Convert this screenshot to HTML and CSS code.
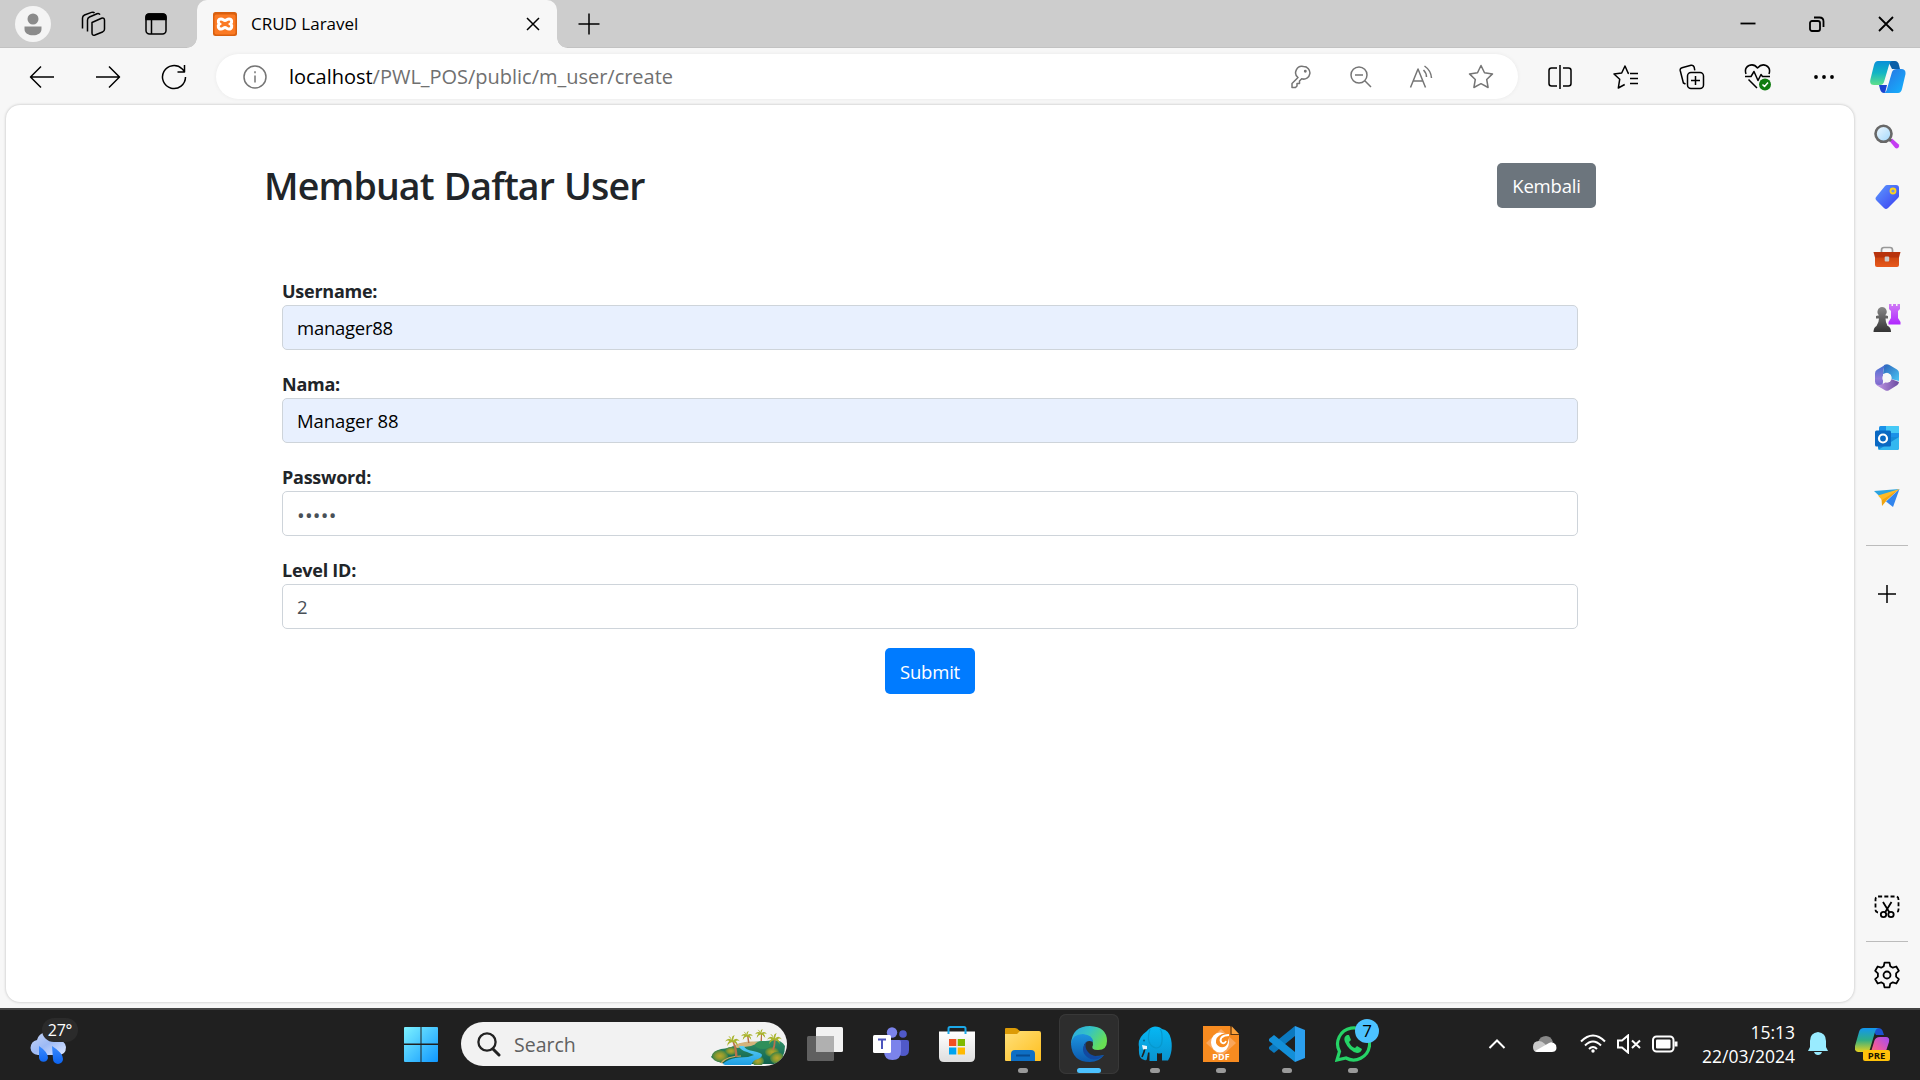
FILE: index.html
```html
<!DOCTYPE html>
<html lang="id">
<head>
<meta charset="utf-8">
<title>CRUD Laravel</title>
<link rel="stylesheet" href="styles.css">
</head>
<body>
<svg class="defs" width="0" height="0" aria-hidden="true">
  <defs>
    <linearGradient id="cpA" x1="0" y1="0" x2="0" y2="1"><stop offset="0" stop-color="#0a8fd8"/><stop offset=".5" stop-color="#12b5c4"/><stop offset="1" stop-color="#5fe08a"/></linearGradient>
    <linearGradient id="cpB" x1="0" y1="0" x2="1" y2="1"><stop offset="0" stop-color="#2a6fe0"/><stop offset="1" stop-color="#14b4ff"/></linearGradient>
    <linearGradient id="cpC" x1="0" y1="0" x2="0" y2="1"><stop offset="0" stop-color="#1296f0"/><stop offset=".5" stop-color="#2fae86"/><stop offset="1" stop-color="#e8d21c"/></linearGradient>
    <linearGradient id="cpD" x1="1" y1="0" x2="0" y2="1"><stop offset="0" stop-color="#a24cf5"/><stop offset=".6" stop-color="#ee5aa0"/><stop offset="1" stop-color="#ff7a55"/></linearGradient>
    <linearGradient id="purple" x1="0" y1="0" x2="0" y2="1"><stop offset="0" stop-color="#cf7bf5"/><stop offset="1" stop-color="#b026ff"/></linearGradient>
    <linearGradient id="tag" x1="0" y1="0" x2="1" y2="1"><stop offset="0" stop-color="#5d9bff"/><stop offset="1" stop-color="#3a3cf0"/></linearGradient>
    <linearGradient id="pawn" x1="0" y1="0" x2="0" y2="1"><stop offset="0" stop-color="#888"/><stop offset="1" stop-color="#333"/></linearGradient>
    <linearGradient id="glass" x1="0" y1="0" x2="1" y2="1"><stop offset="0" stop-color="#f2f9ff"/><stop offset="1" stop-color="#9fd6fa"/></linearGradient>
    <linearGradient id="red" x1="0" y1="0" x2="0" y2="1"><stop offset="0" stop-color="#c9430f"/><stop offset="1" stop-color="#e8591c"/></linearGradient>
    <linearGradient id="hexL" x1="0" y1="0" x2="0" y2="1"><stop offset="0" stop-color="#3d6fd0"/><stop offset=".6" stop-color="#8f7ad8"/><stop offset="1" stop-color="#6f63c6"/></linearGradient>
    <linearGradient id="hexR" x1="0" y1="0" x2="1" y2="1"><stop offset="0" stop-color="#2a60b8"/><stop offset="1" stop-color="#4cc6f4"/></linearGradient>
    <linearGradient id="hexB" x1="0" y1="0" x2="1" y2="0"><stop offset="0" stop-color="#c49be8"/><stop offset="1" stop-color="#6a4aa0"/></linearGradient>
    <linearGradient id="win" x1="0" y1="0" x2="1" y2="1"><stop offset="0" stop-color="#7df2ff"/><stop offset="1" stop-color="#0f97ff"/></linearGradient>
    <linearGradient id="drop" x1="0" y1="0" x2="0" y2="1"><stop offset="0" stop-color="#3b8bff"/><stop offset="1" stop-color="#0b63f0"/></linearGradient>
    <linearGradient id="cloud" x1="0" y1="0" x2="1" y2="1"><stop offset="0" stop-color="#c6d4f5"/><stop offset=".5" stop-color="#9dbaf5"/><stop offset="1" stop-color="#dfe8ff"/></linearGradient>
    <linearGradient id="folder" x1="0" y1="0" x2="1" y2="1"><stop offset="0" stop-color="#ffe07a"/><stop offset="1" stop-color="#ffbf1f"/></linearGradient>
    <linearGradient id="edgeTop" x1="0" y1="0" x2="1" y2=".5"><stop offset="0" stop-color="#2aa4e6"/><stop offset=".5" stop-color="#35c3c4"/><stop offset="1" stop-color="#68e054"/></linearGradient>
    <linearGradient id="edgeLow" x1="0" y1="0" x2="0" y2="1"><stop offset="0" stop-color="#1d95e0"/><stop offset="1" stop-color="#0c58ac"/></linearGradient>
    <linearGradient id="ele" x1="0" y1="0" x2="0" y2="1"><stop offset="0" stop-color="#06b8f4"/><stop offset="1" stop-color="#0a93cf"/></linearGradient>
    <linearGradient id="white" x1="0" y1="0" x2="0" y2="1"><stop offset="0" stop-color="#fff"/><stop offset="1" stop-color="#dedede"/></linearGradient>
    <linearGradient id="river" x1="0" y1="0" x2="0" y2="1"><stop offset="0" stop-color="#5ccdf5"/><stop offset="1" stop-color="#1d9fe4"/></linearGradient>
    <linearGradient id="hill" x1="0" y1="0" x2="0" y2="1"><stop offset="0" stop-color="#2f9068"/><stop offset="1" stop-color="#12604c"/></linearGradient>
    <radialGradient id="bush"><stop offset="0" stop-color="#b9a52e"/><stop offset=".5" stop-color="#8d9a2f"/><stop offset="1" stop-color="#3c8247"/></radialGradient>
    <symbol id="fronds" viewBox="0 0 14 11"><path d="M7 5Q3 1.500 0 6q3-1.500 4-.5-2 1.500-2 5 2-3.500 5-4 3 .5 5 4 0-3.500-2-5 2-1 4 .5Q11 1.500 7.500 5 8 2 9-.0 6 1 6.500 4 5 1 3 .5 4.500 3 7 5z" fill="#a9b42c"/></symbol>
  </defs>
</svg>

<header class="titlebar">
  <div class="title-tools">
    <svg width="36" height="36" viewBox="0 0 36 36"><circle cx="18" cy="18" r="18" fill="#f4f4f4"/><circle cx="18" cy="13" r="5.500" fill="#8b8b8b"/><path d="M9.500 20.500h17v2.500c0 4-3.500 6.300-8.500 6.300S9.500 27 9.500 23z" fill="#8b8b8b"/></svg>
    <svg class="line" width="26" height="26" viewBox="0 0 26 26"><path d="M12 11.500l9.500-4.200q3-1 3 2v9q0 2-2 2.700L15 24q-3 1-3-2zM7.500 20.500V9q0-2 2-3L17 2.700q2-.8 3 1M2.500 17.500V7q0-2 2-3L11.500 1.400q2-.7 3 .6"/></svg>
    <svg class="line" width="24" height="24" viewBox="0 0 24 24"><rect x="2" y="2" width="20" height="20" rx="3.500"/><path d="M2 7.500V5q0-3 3-3h14q3 0 3 3v2.500z" fill="#000"/><path d="M7.500 8v14"/></svg>
  </div>
  <div class="tab">
    <svg width="24" height="24" viewBox="0 0 24 24"><rect width="24" height="24" rx="2.500" fill="#d9600f"/><rect x="1.500" y="2.500" width="21" height="20" rx="2" fill="#fb7a24"/><path d="M8 7c-3 0-3.500 3.500-1.500 5-2 1.500-1.500 5 1.500 5 2 0 2.500-1.500 4-1.500s2 1.500 4 1.500c3 0 3.500-3.500 1.500-5 2-1.500 1.500-5-1.500-5-2 0-2.500 1.500-4 1.500S10 7 8 7z" fill="none" stroke="#fff" stroke-width="3"/></svg>
    <span class="tab-title">CRUD Laravel</span>
    <svg class="line close" width="14" height="14" viewBox="0 0 14 14"><path d="M1 1l12 12M13 1L1 13"/></svg>
  </div>
  <div class="new-tab"><svg class="line" width="22" height="22" viewBox="0 0 22 22"><path d="M11 .5v21M.5 11h21"/></svg></div>
  <div class="window-buttons">
    <svg class="line bold" width="16" height="16" viewBox="0 0 16 16"><path d="M.5 7.500h15"/></svg>
    <svg class="line bold" width="16" height="16" viewBox="0 0 16 16"><rect x="1" y="5" width="10" height="10" rx="2"/><path d="M5 1.500h5.500q4 0 4 4V11"/></svg>
    <svg class="line bold" width="16" height="16" viewBox="0 0 16 16"><path d="M1 1l14 14M15 1L1 15"/></svg>
  </div>
</header>

<nav class="toolbar">
  <div class="nav-buttons">
    <svg class="line" width="26" height="24" viewBox="0 0 26 24"><path d="M25 12H2M12 1.500L1.500 12 12 22.500"/></svg>
    <svg class="line" width="26" height="24" viewBox="0 0 26 24"><path d="M1 12h23M14 1.500L24.500 12 14 22.500"/></svg>
    <svg class="line" width="26" height="26" viewBox="0 0 26 26"><path d="M24.500 13A11.500 11.500 0 1 1 21 4.800L23.500 7.500M23.500 1v7h-7"/></svg>
  </div>
  <div class="address">
    <svg class="line grey" width="24" height="24" viewBox="0 0 24 24"><circle cx="12" cy="12" r="11"/><path d="M12 10.500v7M12 6.300v2"/></svg>
    <span class="url"><b>localhost</b>/PWL_POS/public/m_user/create</span>
    <div class="address-icons">
      <svg class="line grey" width="20" height="24" viewBox="0 0 20 24"><path d="M12.500 1.500a6.300 6.300 0 1 1-1.800 12.300L8.500 16v2.500H6V21l-1.500 1.500H1V18.500l6-6A6.300 6.300 0 0 1 12.500 1.500z"/><circle cx="14.300" cy="6.300" r=".7"/></svg>
      <svg class="line grey" width="22" height="22" viewBox="0 0 22 22"><circle cx="9" cy="9" r="8"/><path d="M14.800 14.800L21 21M5 9h8"/></svg>
      <svg class="line grey" width="24" height="24" viewBox="0 0 24 24"><path d="M1.500 22.500L9 4l7.500 18.500M4.300 16h9.400M14.500 5q3 3 3 7M15.500 1q6.500 4.500 7 12"/></svg>
      <svg class="line grey" width="26" height="26" viewBox="0 0 26 26"><path d="M13 1.500l3.500 7.300 8 1.100-5.800 5.600 1.400 8L13 19.700l-7.100 3.800 1.400-8L1.500 9.900l8-1.100z"/></svg>
    </div>
  </div>
  <div class="browser-actions">
    <svg class="line" width="26" height="24" viewBox="0 0 26 24"><path d="M10 3H4.500Q2 3 2 5.500v13Q2 21 4.500 21H10M16 3h5.500Q24 3 24 5.500v13Q24 21 21.500 21H16M13 0v24"/></svg>
    <svg class="line" width="26" height="26" viewBox="0 0 26 26"><path d="M16 9.500l-.8-.2L12 2 8.700 9 1 10l5.700 5.300L5.300 24l6.400-3.500M17 9.500h8M17 14.500h8M17 19.500h8M16 9.300l-1.500-.3"/></svg>
    <svg class="line" width="26" height="26" viewBox="0 0 26 26"><path d="M6.500 20L4.400 19 1.200 6.500Q.8 4.500 3 3.800L12 1.300q2.500-.6 3.200 2l.6 3"/><rect x="8.500" y="8.500" width="16" height="16" rx="3.500"/><path d="M16.500 12v9M12 16.500h9"/></svg>
    <svg class="line" width="28" height="28" viewBox="0 0 28 28"><path d="M2 11Q0 5 5 2.500q5-2 8.500 2.500 4-4.500 8.500-2.500Q27 5 25 11M1 13.500h6l3-5 4 9 3-6 1.500 2H26M4.500 16.500L13 25"/><circle cx="21" cy="21.500" r="6" fill="#107c10" stroke="none"/><path d="M18.500 21.500l2 2 3.500-4" stroke="#fff"/></svg>
    <svg width="22" height="6" viewBox="0 0 22 6"><circle cx="3" cy="3" r="1.900"/><circle cx="11" cy="3" r="1.900"/><circle cx="19" cy="3" r="1.900"/></svg>
  </div>
  <div class="copilot">
    <svg width="36" height="34" viewBox="0 0 36 34"><path d="M18 1h7q3 0 4 4l1 4h-8z" fill="#0b5fa8"/><path d="M9 25h8l-2 8h-1q-3 0-4-4z" fill="#1a44d0"/><path d="M8 1h15q-3 0-4 4l-5 17q-1 3-4 3H4q-5 0-3.500-6L4 5q1-4 4-4z" fill="url(#cpA)"/><path d="M27 9h4q5 0 4.500 5L32 29q-1 4-4 4H13q3 0 4-4l5-17q1-3 5-3z" fill="url(#cpB)"/></svg>
  </div>
</nav>

<div class="workspace">
  <main class="page">
    <div class="container">
      <div class="heading">
        <h2>Membuat Daftar User</h2>
        <a class="btn secondary">Kembali</a>
      </div>
      <form class="form">
        <div class="group"><label>Username:</label><input class="control filled" type="text" value="manager88"></div>
        <div class="group"><label>Nama:</label><input class="control filled name" type="text" value="Manager 88"></div>
        <div class="group"><label>Password:</label><input class="control secret" type="password" value="12345"></div>
        <div class="group"><label>Level ID:</label><input class="control" type="text" value="2"></div>
        <div class="actions"><button class="btn primary" type="button">Submit</button></div>
      </form>
    </div>
  </main>

  <aside class="sidebar">
    <div class="side-apps">
      <svg width="26" height="26" viewBox="0 0 26 26"><path d="M15.500 17l2.500-2.500 6.500 5.800q1.500 1.700 0 3.200t-3.200.5z" fill="#c43df2"/><path d="M14 14l3 3" stroke="#666" stroke-width="3"/><circle cx="9.500" cy="9.800" r="8" fill="url(#glass)" stroke="#686868" stroke-width="2.600"/></svg>
      <svg width="26" height="26" viewBox="0 0 26 26"><path d="M13 1h9q3 0 3 3v8q0 1-1 2L14 24q-2 2-4 0l-7.500-7.500q-2-2 0-4L11 2q1-1 2-1z" fill="url(#tag)"/><circle cx="19" cy="7" r="2.500" fill="#6d8ff0" stroke="#ffd31a" stroke-width="1.800"/></svg>
      <svg width="28" height="24" viewBox="0 0 28 24"><path d="M8.500 8V5q0-2.500 2.500-2.500h6q2.500 0 2.500 2.500v3" fill="none" stroke="#999" stroke-width="1.700"/><path d="M2 11h24v9q0 2-2 2H4q-2 0-2-2z" fill="url(#red)"/><path d="M.5 7h27l-1.500 5.500H2z" fill="#b8330c"/><rect x="11.700" y="11.500" width="4.500" height="5" rx="1" fill="#ccc"/></svg>
      <svg width="28" height="28" viewBox="0 0 28 28"><path d="M16 0h2.500v2H20V0h3v2h1.500V0H27v5l-2 2v7l2.500 4v2.500H15.500V18l2.500-4V7l-2-2z" fill="url(#purple)"/><path d="M9 3a4.800 4.800 0 0 1 3.200 8.300L15 12v2.500h-2.500q0 4 2 7.500H15q3 1.500 3 6H.5q0-4.500 3-6Q6 18.500 6 14.500H3V12l3-.7A4.800 4.800 0 0 1 9 3z" fill="url(#pawn)"/></svg>
      <svg width="26" height="28" viewBox="0 0 26 28"><path d="M9 10l1-9 3-.8q1 0 2 .6l8 4.700q2 1.200 2 3.500v8L17 15v-4l-4-2.300z" fill="url(#hexR)"/><path d="M12.500.4Q9 3 9 9.500V18l-1 6-5-3q-2-1.200-2-3.500V9.500Q1 7 3 5.800L11 1q.8-.6 1.500-.6z" fill="url(#hexL)"/><path d="M2 20.300q4 1.700 7.500-.8l7.500-4.500 8 3q-.5 2.300-2 3.200l-8 5q-2 1-4 0l-8-4.700z" fill="url(#hexB)"/><circle cx="13" cy="14" r="4.700" fill="#f7f7f7"/></svg>
      <svg width="26" height="26" viewBox="0 0 26 26"><rect x="5" y="1" width="20" height="18" rx="1.500" fill="#1a91e8"/><path d="M12 1h12q1 0 1 1v6H12z" fill="#45c9f6"/><path d="M4 12h21v11q0 2-2 2H6q-2 0-2-2z" fill="#148bd8"/><path d="M25 12L4 25h19q2 0 2-2z" fill="#33b7f0"/><rect x="1" y="5.500" width="16" height="16" rx="1.500" fill="#0a69c3"/><circle cx="9" cy="13.500" r="4" fill="none" stroke="#fff" stroke-width="2.200"/></svg>
      <svg width="28" height="22" viewBox="0 0 28 22"><path d="M1 4L26.500 2 8.500 11z" fill="#2ca3df"/><path d="M26.500 2l-18 9L9 19l5-6z" fill="#f0a511"/><path d="M26.500 2L13 14.500l7 5.500z" fill="#3285ed"/><path d="M5 8.500L26.500 2 9 13z" fill="#ffbb25"/></svg>
    </div>
    <hr>
    <div class="side-add"><svg class="line" width="20" height="20" viewBox="0 0 20 20"><path d="M10 1v18M1 10h18"/></svg></div>
    <div class="side-shot"><svg class="line bold" width="26" height="24" viewBox="0 0 26 24"><path d="M4 17.500q-2.500-.5-2.500-3v-10q0-3 3-3h17q3 0 3 3v10q0 2.500-2.500 3" stroke-dasharray="4 2.200"/><circle cx="9.500" cy="19.500" r="2.700"/><circle cx="17" cy="19.500" r="2.700"/><path d="M9 7l6.500 10.500M17.500 7L11 17.500"/></svg></div>
    <hr>
    <div class="side-settings"><svg class="line bold" width="28" height="28" viewBox="0 0 28 28"><path d="M11.500 1.700h5l.8 3.500 2.500 1.500 3.500-1.200 2.500 4.300-2.700 2.500v3.400l2.700 2.500-2.500 4.300-3.500-1.200-2.500 1.500-.8 3.500h-5l-.8-3.500-2.500-1.500-3.500 1.200-2.500-4.300 2.700-2.500v-3.400L2.200 9.800l2.500-4.300 3.500 1.200 2.500-1.500z"/><circle cx="14" cy="14" r="3.500"/></svg></div>
  </aside>
</div>

<footer class="taskbar">
  <div class="weather">
    <svg width="36" height="32" viewBox="0 0 36 32"><path d="M8 23q-7-1-7.500-7Q1 9 7 8q2-7 8-7.500Q22 0 24 8q11-1 12 7 0 8-8 8z" fill="url(#cloud)"/><path d="M9 14q9 6 9 12a4.600 4.600 0 0 1-9 0zM22 14q11 7 11 13a5 5 0 0 1-10 0z" fill="url(#drop)"/></svg>
    <span class="temp">27°</span>
  </div>
  <div class="start"><svg width="34" height="35" viewBox="0 0 34 35"><path d="M1 0h15.500v16.500H0V1q0-1 1-1zM17.500 0H33q1 0 1 1v15.500H17.500zM0 18h16.500v17H1q-1 0-1-1zM17.500 18H34v16q0 1-1 1H17.500z" fill="url(#win)"/></svg></div>
  <div class="search">
    <svg width="24" height="26" viewBox="0 0 24 26" fill="none" stroke="#222" stroke-width="2.300"><circle cx="10" cy="11" r="8.600"/><path d="M16 18l6 6" stroke-width="3" stroke-linecap="round"/></svg>
    <span>Search</span>
    <svg class="island" width="75" height="38" viewBox="0 0 75 38"><path d="M18 21q10-6 24-6 14-1 20-2 9 0 12 6 0 12-9 18H14Q5 35 0 30q4-7 10-8z" fill="url(#hill)"/><path d="M22 19q10-6 28-4l-10 4-14 2z" fill="#d5b37b"/><ellipse cx="9" cy="29" rx="8" ry="6" fill="url(#bush)"/><ellipse cx="20" cy="24" rx="6" ry="4" fill="url(#bush)"/><ellipse cx="52" cy="18" rx="8" ry="4" fill="#2f8f5a"/><ellipse cx="61" cy="25" rx="7" ry="5" fill="url(#bush)"/><ellipse cx="47" cy="34" rx="6" ry="5" fill="url(#bush)"/><ellipse cx="66" cy="31" rx="7" ry="6" fill="url(#bush)"/><path d="M12 37q6-7 25-7l6-2-7-3q-7-2-8-6h5q1 4 9 5 9 2 9 4 0 3-7 5-3 2-4 5H14z" fill="url(#river)"/><path d="M10 36q6-7 20-7" stroke="#c9a95f" stroke-width="1.200" fill="none"/><path d="M21 14q3 7 3 16h2.500q0-9-4-16zM36 9l1 7h1.500l-1-7zM50 7l-.5 7H51V7zM63 12q0 6-2 11h2q2-5 1.500-11z" fill="#b8734a"/><use href="#fronds" x="14" y="8" width="15" height="12"/><use href="#fronds" x="30" y="4" width="12" height="9.500"/><use href="#fronds" x="44" y="2" width="12" height="9.500"/><use href="#fronds" x="56" y="6" width="15" height="12"/></svg>
  </div>
  <div class="apps">
    <div class="app"><svg width="36" height="36" viewBox="0 0 36 36"><rect x="9" y="1" width="27" height="25" rx="1.500" fill="#f2f2f2"/><rect x="0" y="10" width="27" height="25" rx="1.500" fill="#606060"/><path d="M9 10h18v16H9z" fill="#b0b0b0"/></svg></div>
    <div class="app"><svg width="36" height="36" viewBox="0 0 36 36"><circle cx="30" cy="8" r="3.800" fill="#5059c9"/><circle cx="19" cy="6.500" r="5.200" fill="#7b83eb"/><path d="M25 14h9q2 0 2 2v8q0 6-6 6-5 0-5-6z" fill="#5059c9"/><path d="M11 14h15q2 0 2 2v9q0 9-8.500 9T11 25z" fill="#7b83eb"/><rect x="0" y="9" width="18" height="18" rx="1.500" fill="#fff"/><path d="M5 13.500h8M9 13.500V23" stroke="#4b53bc" stroke-width="2"/></svg></div>
    <div class="app"><svg width="36" height="36" viewBox="0 0 36 36"><path d="M0 5.500h36V31q0 5-5 5H5q-5 0-5-5z" fill="url(#white)"/><path d="M9.500 8V2.500q0-1.500 1.500-1.500h14q1.500 0 1.500 1.500V8" fill="none" stroke="#1ba8e8" stroke-width="2"/><path d="M10 13h7.300v7H10z" fill="#f25022"/><path d="M18.700 13H26v7h-7.300z" fill="#7fba00"/><path d="M10 21.500h7.300v7H10z" fill="#00a4ef"/><path d="M18.700 21.500H26v7h-7.300z" fill="#ffb900"/></svg></div>
    <div class="app open"><svg width="36" height="36" viewBox="0 0 36 36"><path d="M0 3q0-1 1-1h9q2 0 3 1.500L15 5v6H0z" fill="#dc9b06"/><path d="M0 8h12l3-3h19q2 0 2 2v27q0 1-1 1H1q-1 0-1-1z" fill="url(#folder)"/><path d="M6 35v-7q0-4 4-4h16q4 0 4 4v7z" fill="#0e6fc4"/><path d="M11 29.500h14" stroke="#084c91" stroke-width="2"/></svg></div>
    <div class="app open active"><svg width="36" height="36" viewBox="0 0 36 36"><path d="M0 18Q1 0 19 0q17 1 17 15 0 9-9 9-8 0-5-5 1-8-8-9Q5 10 0 18z" fill="url(#edgeTop)"/><path d="M0 18q1-10 12-10 10 1 10 8-6-3-9 3-3 14 20 10-5 7-14 7Q1 36 0 18z" fill="url(#edgeLow)"/><path d="M16 15q-8 9 0 16 8 6 17-2-8 3-14-1-7-6-3-13z" fill="#1249a0"/></svg></div>
    <div class="app open"><svg width="34" height="36" viewBox="0 0 34 36"><path d="M9 5q3-4 8-4.500 5 0 7 2.500 7 1 9 10 1.500 7 0 14-1 5-3 7.500h-6V27q-3 1-5 0v8h-7.500v-8.500H10Q9 33 8.500 34q-4 1-6.500-3-1.500-3-1-10Q-1 12 9 5z" fill="url(#ele)"/><path d="M12 3q-5 16 6 19 7 0 6-12 0-5-2-7" fill="none" stroke="#0798cd" stroke-width="1.200"/><path d="M7 22q-1 5-3 9" stroke="#202020" stroke-width="1.600" fill="none"/><path d="M4 19l5 1v3l-4 .5z" fill="#e8f6fc"/><circle cx="6" cy="14.500" r=".9" fill="#075b80"/></svg></div>
    <div class="app open"><svg width="36" height="36" viewBox="0 0 36 36"><path d="M0 0h27l9 9v27H0z" fill="#f78b20"/><path d="M28.500 0v8H36z" fill="#fba23b"/><path d="M28 0v8.500h8" fill="none" stroke="#5b3510" stroke-width="1.200"/><path d="M18 3l15 14-15 14L3 17z" fill="#faa65a"/><ellipse cx="17" cy="16.500" rx="9" ry="10" fill="#fff"/><path d="M27 8q-4-1-8 0-7 3-6 9 2 5 8 4 4-2 4-6z" fill="#f78b20"/><path d="M26 9q-5 0-7.500 2.500-2 3 0 5 3 2 4.500-1.500" fill="none" stroke="#fff" stroke-width="1.800"/><text class="pdf" x="18" y="34" text-anchor="middle">PDF</text></svg></div>
    <div class="app open"><svg width="36" height="36" viewBox="0 0 36 36"><path d="M26 0l10 4v28l-10 4z" fill="#2b9fee"/><path d="M26 0v10L5 27l-5-4v-2z" fill="#0b79bf"/><path d="M0 13l5-4 21 17v10L0 15z" fill="#138fd8"/></svg></div>
    <div class="app open"><svg width="36" height="36" viewBox="0 0 36 36"><path d="M2 34l2.500-8.500A16 16 0 1 1 11 32z" fill="none" stroke="#25d366" stroke-width="3.200"/><path d="M12 9q-4 2-2 7 4 9 12 11 4 0 5-4l-5-3-2 2q-4-1-6-6l2-2-2-5z" fill="#25d366"/></svg><span class="badge">7</span></div>
  </div>
  <div class="tray">
    <svg class="light" width="18" height="18" viewBox="0 0 18 18"><path d="M1.500 13L9 5.500l7.500 7.500"/></svg>
    <svg width="26" height="18" viewBox="0 0 26 18"><path d="M6 7q2-6 8-6 5 0 7 6l-8 5z" fill="#888"/><path d="M1 12q0-6 6-6 3 0 6 3l7 8H5q-4 0-4-5z" fill="#c9c9c9"/><path d="M3 16l14-8q4-2 7 2 2 7-4 7H5z" fill="#fff"/></svg>
    <svg class="light" width="26" height="20" viewBox="0 0 26 20"><path d="M1 7.500q12-12 24 0M5 11.500q8-8 16 0M9 15q4-4 8 0"/><circle cx="13" cy="17" r="1.700" fill="#fff" stroke="none"/></svg>
    <svg class="light" width="24" height="20" viewBox="0 0 24 20"><path d="M1 6.500h4l6-5v17l-6-5H1zM15 6.500l8 7.500M23 6.500L15 14"/></svg>
    <svg class="light" width="26" height="18" viewBox="0 0 26 18"><rect x="1" y="1.500" width="20.500" height="15" rx="3.500"/><rect x="4" y="4.500" width="14.500" height="9" rx="1" fill="#fff" stroke="none"/><path d="M24 6.500v5" stroke-width="3"/></svg>
  </div>
  <div class="clock"><span>15:13</span><span>22/03/2024</span></div>
  <div class="bell"><svg width="20" height="24" viewBox="0 0 20 24"><path d="M10 0q8 1 8 9v6l2 4H0l2-4V9q0-8 8-9zM6 20h8q-1 3-4 3t-4-3z" fill="#99ebff"/></svg></div>
  <div class="preview">
    <svg width="36" height="34" viewBox="0 0 36 34"><path d="M17 1h6q4 0 5 4l1 3h-8z" fill="#1b52cf"/><path d="M9 1h15q-3 0-4 4l-5 17q-1 3-4 3H3q-4 0-3-6L4 5q1-4 5-4z" fill="url(#cpC)"/><path d="M25 10h6q4 0 3 5l-3 9q-1 4-4 4H15l4-13q1-5 6-5z" fill="url(#cpD)"/></svg>
    <span class="pre">PRE</span>
  </div>
</footer>
</body>
</html>
```
FILE: styles.css
```css
* { box-sizing: border-box; }

body {
  margin: 0;
  width: 1920px;
  height: 1080px;
  overflow: hidden;
  display: flex;
  flex-direction: column;
  background: #f7f7f7;
  color: #000;
  font-family: "Open Sans", "Noto Sans", sans-serif;
}

svg { display: block; flex: none; }
.defs { position: absolute; }
.line { fill: none; stroke: #000; stroke-width: 1.5; stroke-linejoin: round; }
.line.bold { stroke-width: 1.8; }
.line.grey { stroke: #757575; }
.light { fill: none; stroke: #fff; stroke-width: 2; }

/* title bar */
.titlebar {
  height: 48px;
  display: flex;
  align-items: stretch;
  background: #cdcdcd;
  box-shadow: inset 0 -1px #c2c2c2;
}
.title-tools {
  width: 193px;
  margin-right: 4px;
  display: grid;
  grid-template-columns: 66px 53px 74px;
  place-items: center;
}
.tab {
  position: relative;
  width: 360px;
  padding: 0 17px 0 16px;
  display: flex;
  align-items: center;
  background: #f7f7f7;
  border-radius: 10px 10px 0 0;
}
.tab::before, .tab::after {
  content: "";
  position: absolute;
  bottom: 0;
  width: 10px;
  height: 10px;
}
.tab::before { left: -10px; background: radial-gradient(circle at 0 0, #cdcdcd 9.5px, #f7f7f7 10px); }
.tab::after { right: -10px; background: radial-gradient(circle at 100% 0, #cdcdcd 9.5px, #f7f7f7 10px); }
.tab-title { margin-left: 14px; font-size: 17px; letter-spacing: 0; line-height: 24px; }
.close { margin-left: auto; }
.new-tab { width: 64px; display: grid; place-items: center; }
.window-buttons { margin-left: auto; display: grid; grid-template-columns: repeat(3, 69px); place-items: center; }

/* toolbar */
.toolbar { height: 57px; display: flex; align-items: center; }
.nav-buttons { margin: 0 9px; display: grid; grid-template-columns: repeat(3, 66px); place-items: center; }
.address {
  width: 1302px;
  height: 45px;
  padding: 0 7px 0 27px;
  display: flex;
  align-items: center;
  background: #fff;
  border-radius: 23px;
  box-shadow: 0 0 4px rgba(0, 0, 0, .06);
}
.url { margin-left: 22px; font-size: 20px; letter-spacing: -.02px; color: #707070; white-space: nowrap; }
.url b { font-weight: 400; color: #000; }
.address-icons { margin-left: auto; display: grid; grid-template-columns: repeat(4, 60px); place-items: center; }
.browser-actions { margin-left: 9px; display: grid; grid-template-columns: repeat(5, 66px); place-items: center; }
.copilot { width: 61px; display: grid; place-items: center; }

/* page and side panel */
.workspace { height: 903px; display: flex; }
.page {
  width: 1848px;
  height: 897px;
  margin: 0 0 0 6px;
  background: #fff;
  border-radius: 14px;
  box-shadow: 0 0 3px rgba(0, 0, 0, .25);
}
.container { width: 1332px; margin: 0 auto; padding-top: 58px; }
.heading { display: flex; justify-content: space-between; align-items: flex-start; height: 113px; }
.heading h2 {
  margin: 0;
  color: #212529;
  font-size: 37.500px;
  line-height: 46px;
  font-weight: 600;
  letter-spacing: -.85px;
  word-spacing: 1px;
  white-space: nowrap;
}
.btn {
  display: block;
  height: 45px;
  padding: 0;
  border: 0;
  border-radius: 5px;
  color: #fff;
  font: 18.500px/46px "Open Sans", sans-serif;
  letter-spacing: -.2px;
  text-align: center;
}
.secondary { width: 99px; background: #6c757d; }
.primary { width: 90px; height: 46px; line-height: 48px; background: #007bff; }
.form { margin: 0 18px; }
.group { height: 93px; }
.group label {
  display: block;
  height: 29px;
  line-height: 31px;
  font-size: 18px;
  font-weight: 700;
  letter-spacing: -.25px;
  color: #212529;
}
.control {
  display: block;
  width: 100%;
  height: 45px;
  padding: 0 14px;
  border: 1px solid #ced4da;
  border-radius: 5px;
  background: #fff;
  color: #495057;
  font: 18.500px "Open Sans", sans-serif;
  letter-spacing: -.25px;
}
.filled { background: #e8f0fe; color: #000; }
.name { letter-spacing: -.1px; }
.secret { padding-top: 2px; font-size: 20.500px; letter-spacing: .2px; }
.actions { display: flex; justify-content: center; }

.sidebar { width: 66px; padding-top: 2px; display: flex; flex-direction: column; align-items: center; }
.side-apps { display: grid; grid-template-rows: repeat(7, 60.200px); place-items: center; }
.sidebar hr { width: 42px; height: 1px; margin: 0; border: 0; background: #bcbcbc; flex: none; }
.side-apps + hr { margin-top: 17px; }
.side-add { height: 96px; display: grid; place-items: center; }
.side-shot { margin-top: auto; height: 68px; display: grid; place-items: center; }
.side-settings { height: 66px; display: grid; place-items: center; }

/* taskbar */
.taskbar {
  height: 72px;
  padding-bottom: 2px;
  display: flex;
  align-items: center;
  background: #202020;
  border-top: 2px solid #444;
  color: #fff;
}
.taskbar > * { flex: none; }
.weather { position: relative; width: 404px; height: 68px; padding: 22px 0 0 30px; }
.temp {
  position: absolute;
  left: 42px;
  top: 8px;
  width: 36px;
  height: 24px;
  border-radius: 12px;
  background: #2b2b2b;
  font-size: 16px;
  line-height: 24px;
  letter-spacing: -.2px;
  text-align: center;
}
.start { width: 57px; }
.search {
  width: 326px;
  height: 44px;
  padding-left: 16px;
  display: flex;
  align-items: center;
  background: #f2f2f2;
  border-radius: 22px;
  overflow: hidden;
  color: #606060;
  font-size: 19.500px;
}
.search span { margin-left: 13px; letter-spacing: 0; }
.island { margin: 3px 1px 0 auto; }
.apps { margin-left: 5px; display: grid; grid-template-columns: repeat(9, 66px); justify-items: center; }
.app {
  position: relative;
  width: 60px;
  height: 60px;
  display: grid;
  place-items: center;
  border-radius: 7px;
}
.active { background: #2d2d2d; box-shadow: inset 0 0 0 1px #383838; }
.open::after {
  content: "";
  position: absolute;
  bottom: 1px;
  left: 25px;
  width: 10px;
  height: 5px;
  border-radius: 3px;
  background: #9a9a9a;
}
.active::after { left: 18px; width: 24px; background: #4cc2ff; }
.badge {
  position: absolute;
  left: 32px;
  top: 5px;
  width: 24px;
  height: 24px;
  border-radius: 50%;
  background: #4cc2ff;
  color: #000;
  font-size: 17px;
  line-height: 24px;
  text-align: center;
}
.pdf { fill: #fff; font: 700 9px "Open Sans", sans-serif; }
.tray {
  margin-left: 87px;
  display: grid;
  grid-template-columns: 48px 48px 48px 24px 48px;
  place-items: center;
}
.clock {
  width: 106px;
  display: flex;
  flex-direction: column;
  align-items: flex-end;
  font-size: 17.500px;
  line-height: 24px;
  white-space: nowrap;
}
.bell { margin-left: 13px; }
.preview { position: relative; margin-left: 27px; }
.pre {
  position: absolute;
  left: 8px;
  top: 23px;
  width: 27px;
  height: 11px;
  border-radius: 2px;
  background: #ffc20a;
  color: #1b1400;
  font-size: 9.500px;
  font-weight: 700;
  line-height: 11px;
  text-align: center;
}
```
